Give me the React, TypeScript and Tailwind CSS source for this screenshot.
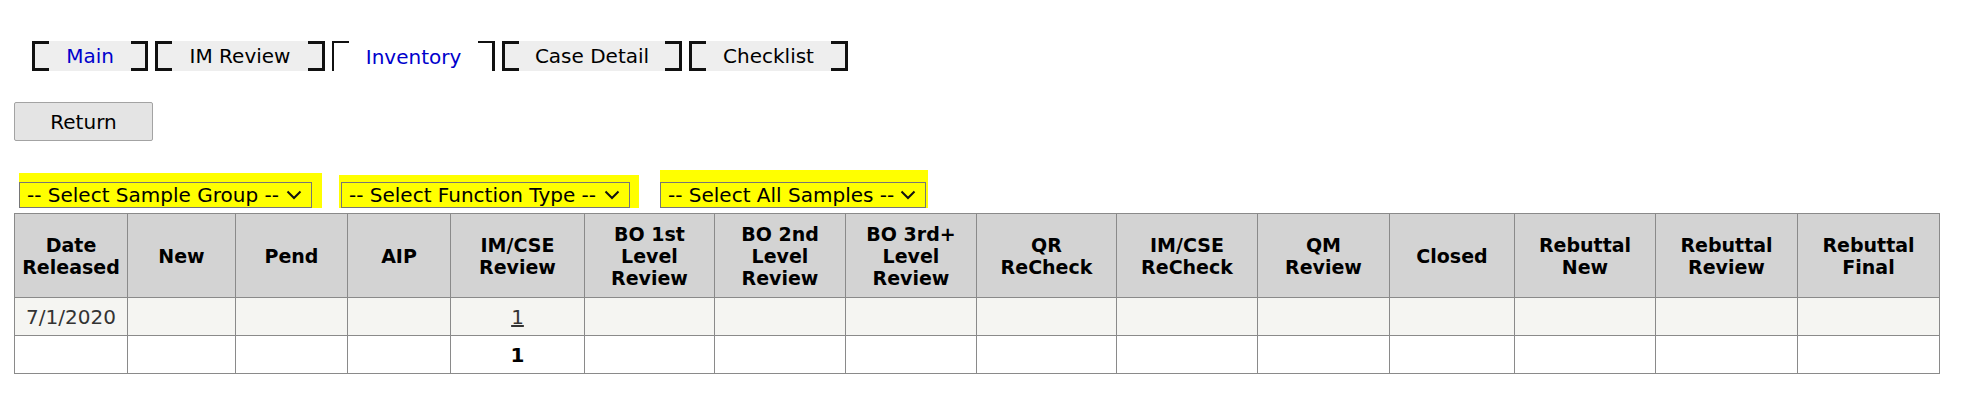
// tab strip data (widths taken from the screen)
const tabs = [
  { label: "Main", w: "w-[116px]", link: true, active: false },
  { label: "IM Review", w: "w-[170px]", link: false, active: false },
  { label: "Inventory", w: "w-[163px]", link: true, active: true },
  { label: "Case Detail", w: "w-[180px]", link: false, active: false },
  { label: "Checklist", w: "w-[159px]", link: false, active: false },
];

const columns = [
  { w: "w-[113px]", label: ["Date", "Released"] },
  { w: "w-[108px]", label: ["New"] },
  { w: "w-[112px]", label: ["Pend"] },
  { w: "w-[103px]", label: ["AIP"] },
  { w: "w-[134px]", label: ["IM/CSE", "Review"] },
  { w: "w-[130px]", label: ["BO 1st", "Level", "Review"] },
  { w: "w-[131px]", label: ["BO 2nd", "Level", "Review"] },
  { w: "w-[131px]", label: ["BO 3rd+", "Level", "Review"] },
  { w: "w-[140px]", label: ["QR", "ReCheck"] },
  { w: "w-[141px]", label: ["IM/CSE", "ReCheck"] },
  { w: "w-[132px]", label: ["QM", "Review"] },
  { w: "w-[125px]", label: ["Closed"] },
  { w: "w-[141px]", label: ["Rebuttal", "New"] },
  { w: "w-[142px]", label: ["Rebuttal", "Review"] },
  { w: "w-[142px]", label: ["Rebuttal", "Final"] },
];

function Tab({ label, w, link, active }: (typeof tabs)[number]) {
  if (active) {
    return (
      <div className={`flex h-[30px] bg-white ${w}`}>
        <div className="w-[17px] border-l-2 border-t-2 border-[#111]" />
        <div className={`flex-1 flex items-center justify-center pt-[2px] ${link ? "text-[#0000cc]" : "text-black"}`}>
          {label}
        </div>
        <div className="w-[17px] border-r-[3px] border-t-2 border-[#111]" />
      </div>
    );
  }
  return (
    <div className={`flex h-[30px] bg-[#eeeeee] ${w}`}>
      <div className="w-[17px] border-l-[3px] border-y-[3px] border-[#111]" />
      <div className={`flex-1 flex items-center justify-center ${link ? "text-[#0000cc]" : "text-black"}`}>
        {label}
      </div>
      <div className="w-[17px] border-r-[3px] border-y-[3px] border-[#111]" />
    </div>
  );
}

function FakeSelect({ text, w }: { text: string; w: string }) {
  return (
    <div className={`flex h-[26px] items-center justify-between border border-[#767676] bg-[#ffff00] pl-[7px] pr-[9px] text-black ${w}`}>
      <span>{text}</span>
      <svg width="16" height="10" viewBox="0 0 16 10" fill="none">
        <polyline points="1.5,1.5 8,8 14.5,1.5" stroke="#111" strokeWidth="2" />
      </svg>
    </div>
  );
}

export default function App() {
  return (
    <div className="h-[400px] w-[1969px] bg-white font-['DejaVu_Sans',Verdana,sans-serif] text-[20px] leading-none">
      {/* tab strip */}
      <div className="flex gap-[7px] pl-[32px] pt-[41px]">
        {tabs.map((t) => (
          <Tab key={t.label} {...t} />
        ))}
      </div>

      <div className="pl-[14px] pt-[31px]">
        <button className="flex h-[39px] w-[139px] items-center justify-center rounded-[2px] border border-[#a3a3a3] bg-[#e4e4e4] text-black">
          Return
        </button>
      </div>

      {/* filters, highlighted */}
      <div className="flex items-end pt-[29px]">
        <div className="ml-[19px] bg-[#ffff00] pr-[10px] pt-[9px]">
          <FakeSelect text="-- Select Sample Group --" w="w-[293px]" />
        </div>
        <div className="ml-[17px] bg-[#ffff00] pl-[2px] pr-[9px] pt-[7px]">
          <FakeSelect text="-- Select Function Type --" w="w-[289px]" />
        </div>
        <div className="ml-[21px] bg-[#ffff00] pr-[2px] pt-[12px]">
          <FakeSelect text="-- Select All Samples --" w="w-[266px]" />
        </div>
      </div>

      <div className="pl-[14px] pt-[5px]">
        <table className="w-[1926px] table-fixed border-collapse">
          <colgroup>
            {columns.map((c, i) => (
              <col key={i} className={c.w} />
            ))}
          </colgroup>
          <thead>
            <tr className="h-[84px] bg-[#d3d3d3]">
              {columns.map((c, i) => (
                <th key={i} className="border border-[#8a8a8a] text-center align-middle text-[19px] font-bold leading-[22px] text-black">
                  {c.label.map((l) => (
                    <div key={l}>{l}</div>
                  ))}
                </th>
              ))}
            </tr>
          </thead>
          <tbody>
            <tr className="h-[38px] bg-[#f5f5f2] text-[#333333]">
              {columns.map((_, i) => (
                <td key={i} className="border border-[#8a8a8a] text-center align-middle">
                  {i === 0 ? "7/1/2020" : i === 4 ? <a className="underline">1</a> : null}
                </td>
              ))}
            </tr>
            <tr className="h-[38px] bg-white">
              {columns.map((_, i) => (
                <td key={i} className="border border-[#8a8a8a] text-center align-middle font-bold text-black">
                  {i === 4 ? "1" : null}
                </td>
              ))}
            </tr>
          </tbody>
        </table>
      </div>
    </div>
  );
}
